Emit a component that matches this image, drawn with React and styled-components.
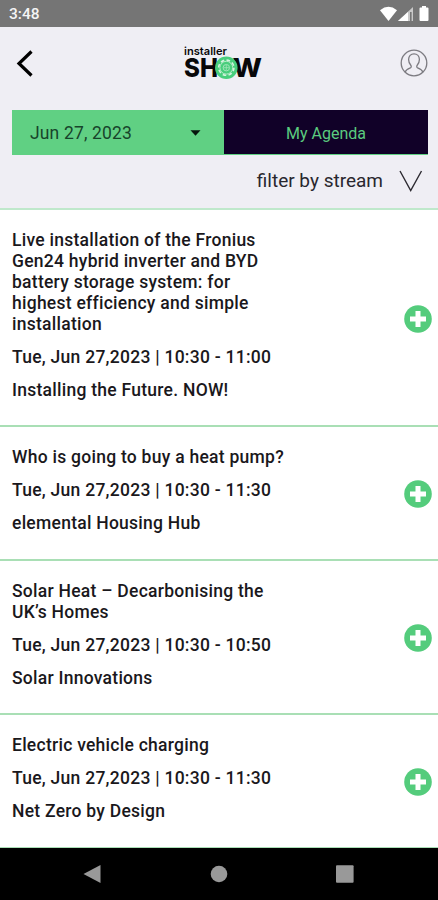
import React from "react";
import styled, { createGlobalStyle } from "styled-components";

const GlobalStyle = createGlobalStyle`
  * {
    box-sizing: border-box;
  }

  body {
    margin: 0;
    background: #ffffff;
    font-family: Roboto, "Liberation Sans", sans-serif;
    color: #1a181c;
  }

  button {
    border: none;
    padding: 0;
    background: none;
    font: inherit;
  }
`;

const Screen = styled.div`
  width: 438px;
  height: 900px;
  display: flex;
  flex-direction: column;
  overflow: hidden;
`;

const StatusBar = styled.div`
  height: 27px;
  flex: none;
  display: flex;
  justify-content: space-between;
  align-items: center;
  padding: 1px 8px 0 9px;
  background: #757575;
  color: #f4f4f4;
  font-size: 15.5px;
  font-weight: 500;
`;

const Top = styled.header`
  height: 183px;
  flex: none;
  background: #efeef4;
  border-bottom: 2px solid #bfe8cb;
`;

const TitleBar = styled.div`
  height: 83px;
  display: flex;
  align-items: flex-start;
  padding: 17px 10px 0 16px;
`;

const IconButton = styled.button`
  display: flex;
  margin-top: ${(props) => props.$top || 0}px;
`;

const Brand = styled.div`
  flex: 1;
  display: flex;
  justify-content: center;
  padding-left: 14px;
`;

const Tabs = styled.div`
  display: flex;
  height: 45px;
  margin: 0 10px 0 12px;
  font-size: 17.5px;
`;

const DateSelect = styled.button`
  width: 212px;
  display: flex;
  justify-content: space-between;
  align-items: center;
  padding: 1px 23px 0 18px;
  background: #60d083;
  color: #17442b;
  letter-spacing: 0.15px;
`;

const AgendaButton = styled.button`
  flex: 1;
  padding-top: 2px;
  background: #110128;
  border-bottom: 1px solid #60d083;
  color: #5bcb7f;
  font-size: 16px;
`;

const Filter = styled.button`
  width: 100%;
  display: flex;
  justify-content: flex-end;
  align-items: center;
  gap: 16px;
  padding: 14px 15px 0 0;
  color: #29272e;
  font-size: 19px;
  line-height: 24px;
`;

const List = styled.main`
  flex: 1;
  overflow: hidden;
`;

const Session = styled.article`
  display: flex;
  justify-content: space-between;
  align-items: center;
  padding: 20px 6px 24.4px 12px;
  border-bottom: 2px solid #a9dfb5;
  font-size: 17.5px;
  font-weight: 500;
  line-height: 21px;
`;

const Details = styled.div`
  width: 280px;
  display: flex;
  flex-direction: column;
  gap: 12px;
`;

const Line = styled.p`
  margin: 0;
  letter-spacing: 0.26px;
`;

const NavigationBar = styled.nav`
  height: 52px;
  flex: none;
  display: flex;
  justify-content: space-between;
  align-items: center;
  padding: 0 83px 0 82px;
  background: #000000;
`;

const sessions = [
  {
    title:
      "Live installation of the Fronius Gen24 hybrid inverter and BYD battery storage system: for highest efficiency and simple installation",
    time: "Tue, Jun 27,2023 | 10:30 - 11:00",
    place: "Installing the Future. NOW!",
  },
  {
    title: "Who is going to buy a heat pump?",
    time: "Tue, Jun 27,2023 | 10:30 - 11:30",
    place: "elemental Housing Hub",
  },
  {
    title: "Solar Heat – Decarbonising the UK’s Homes",
    time: "Tue, Jun 27,2023 | 10:30 - 10:50",
    place: "Solar Innovations",
  },
  {
    title: "Electric vehicle charging",
    time: "Tue, Jun 27,2023 | 10:30 - 11:30",
    place: "Net Zero by Design",
  },
];

const StatusIcons = () => (
  <svg width="50" height="16" viewBox="0 0 50 16" fill="#ffffff">
    <path d="M0 4.2Q8.5 -2.6 17 4.2L8.5 15Z" />
    <path d="M33 1V15H18Z" fill="#c9c9c9" />
    <path d="M28 6V15H18Z" />
    <path d="M30 6h1.6v9H30Z" fill="#757575" />
    <path d="M42 1.5V0h4v1.5h1.5q1 0 1 1V14q0 1-1 1h-7q-1 0-1-1V2.5q0-1 1-1Z" />
  </svg>
);

const Logo = () => (
  <svg
    width="80"
    height="38"
    viewBox="0 0 80 38"
    fill="#08080a"
    fontFamily="Inter, sans-serif"
  >
    <text
      x="0"
      y="11"
      fontSize="11"
      fontWeight="600"
      textLength="43"
      lengthAdjust="spacingAndGlyphs"
    >
      installer
    </text>
    <g fontSize="26" fontWeight="800">
      <text x="0" y="33" textLength="34" lengthAdjust="spacingAndGlyphs">
        SH
      </text>
      <text x="48.5" y="33" textLength="29.5" lengthAdjust="spacingAndGlyphs">
        W
      </text>
    </g>
    <circle cx="42.3" cy="23.7" r="11.3" fill="#48ce7c" />
    <circle
      cx="42.3"
      cy="23.7"
      r="7.6"
      fill="none"
      stroke="#d4f3df"
      strokeWidth="1.6"
      strokeDasharray="3.6 2.37"
    />
    <circle cx="42.3" cy="23.7" r="6.4" fill="none" stroke="#b5ebc7" />
    <circle cx="42.3" cy="23.7" r="3.2" fill="none" stroke="#9fe5b8" />
    <path d="M39.3 23.7h6M42.3 21v5.4" stroke="#9fe5b8" strokeWidth="0.8" />
  </svg>
);

const AddIcon = () => (
  <svg width="28" height="28" viewBox="0 0 28 28">
    <circle cx="14" cy="14" r="13.8" fill="#54cc7c" />
    <path d="M14 6v16M6 14h16" stroke="#ffffff" strokeWidth="5" />
  </svg>
);

export default function App() {
  return (
    <>
      <GlobalStyle />
      <Screen>
        <StatusBar>
          <span>3:48</span>
          <StatusIcons />
        </StatusBar>

        <Top>
          <TitleBar>
            <IconButton $top={6} aria-label="Back">
              <svg width="18" height="28" viewBox="0 0 18 28" fill="none">
                <path d="M15.5 1.5L3 13.5L15.5 25.5" stroke="#000000" strokeWidth="3.2" />
              </svg>
            </IconButton>
            <Brand>
              <Logo />
            </Brand>
            <IconButton $top={5} aria-label="Profile">
              <svg
                width="28"
                height="28"
                viewBox="0 0 28 28"
                fill="none"
                stroke="#7c7b81"
                strokeWidth="1.3"
              >
                <circle cx="14" cy="14" r="12.8" />
                <path d="M5 23.2c.8-2.4 3-3.3 5.4-4.3 1-.5 1.1-1.8.4-2.6-1.4-1.6-2.2-3.4-2.2-5.7 0-3.4 2.2-5.8 5.4-5.8s5.4 2.4 5.4 5.8c0 2.3-.8 4.1-2.2 5.7-.7.8-.6 2.1.4 2.6 2.4 1 4.6 1.9 5.4 4.3" />
              </svg>
            </IconButton>
          </TitleBar>

          <Tabs>
            <DateSelect>
              Jun 27, 2023
              <svg width="11" height="6" viewBox="0 0 11 6">
                <path d="M0.5 0.3h10L5.5 5.7Z" fill="#06170d" />
              </svg>
            </DateSelect>
            <AgendaButton>My Agenda</AgendaButton>
          </Tabs>

          <Filter>
            filter by stream
            <svg width="24" height="22" viewBox="0 0 24 22" fill="none">
              <path d="M1 1L11.7 20.5L22.5 1" stroke="#2c2a31" strokeWidth="1.4" />
            </svg>
          </Filter>
        </Top>

        <List>
          {sessions.map((session) => (
            <Session key={session.title}>
              <Details>
                <Line>{session.title}</Line>
                <Line>{session.time}</Line>
                <Line>{session.place}</Line>
              </Details>
              <IconButton $top={6} aria-label="Add to agenda">
                <AddIcon />
              </IconButton>
            </Session>
          ))}
        </List>

        <NavigationBar>
          <svg width="19" height="20" viewBox="0 0 19 20" fill="#999999">
            <path d="M18.5 1v18L1.5 10Z" />
          </svg>
          <svg width="18" height="18" viewBox="0 0 18 18" fill="#999999">
            <circle cx="9" cy="9" r="8.3" />
          </svg>
          <svg width="19" height="18" viewBox="0 0 19 18" fill="#999999">
            <rect x="0" y="0.2" width="17.6" height="17.6" rx="1" />
          </svg>
        </NavigationBar>
      </Screen>
    </>
  );
}
